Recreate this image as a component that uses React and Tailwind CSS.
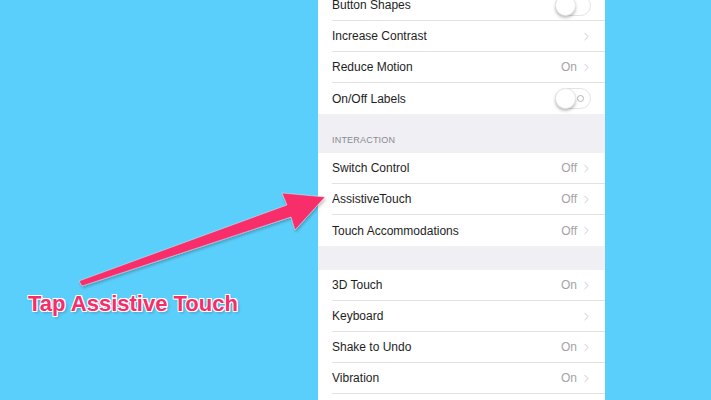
import { ChevronRight } from 'lucide-react'

const Toggle = ({ labels }) => (
  <div className="relative w-[36px] h-[21px] rounded-full border border-[#e3e3e6] bg-white">
    {labels && (
      <div className="absolute right-[6px] top-[6px] w-[7px] h-[7px] rounded-full border border-[#b4b4b8]" />
    )}
    <div className="absolute -left-px -top-px w-[21px] h-[21px] rounded-full bg-white shadow-[0_2px_3px_rgba(0,0,0,0.25)] border border-[#e6e6e8]" />
  </div>
)

const Row = ({ label, value, chevron, toggle, labels, last }) => (
  <div className="h-[31px] shrink-0 pl-[14px] bg-white">
    <div className={`h-full flex items-center pr-[14px] ${last ? '' : 'border-b border-[#e2e2e6]'}`}>
      <span className="flex-1 text-[12px] text-[#1e1e1e]">{label}</span>
      {value && <span className="text-[12px] text-[#a3a3a8] mr-[3px]">{value}</span>}
      {chevron && <ChevronRight size={13} strokeWidth={1.6} className="text-[#c4c4c9] -mr-[2px]" />}
      {toggle && <Toggle labels={labels} />}
    </div>
  </div>
)

export default function App() {
  return (
    <div
      className="relative w-[711px] h-[400px] overflow-hidden bg-[#5bcffb] flex"
      style={{ fontFamily: '"Liberation Sans", Arial, sans-serif' }}
    >
      <div className="w-[318px] shrink-0 flex flex-col justify-end pb-[80px] pl-[28px]">
        <span
          className="text-[22px] font-bold text-[#f72d6b]"
          style={{
            textShadow:
              '0 0 1px #fff, 1px 1px 0 #fff, -1px -1px 0 #fff, 1px -1px 0 #fff, -1px 1px 0 #fff, 2px 2px 3px rgba(0,0,0,0.25)',
          }}
        >
          Tap Assistive Touch
        </span>
      </div>

      <div className="w-[287px] shrink-0 bg-[#efeff4] flex flex-col -mt-[10px]">
        <Row label="Button Shapes" toggle />
        <Row label="Increase Contrast" chevron />
        <Row label="Reduce Motion" value="On" chevron />
        <Row label="On/Off Labels" toggle labels last />

        <div className="h-[39px] shrink-0 flex items-end pl-[14px] pb-[6px]">
          <span className="text-[9px] text-[#8a8a8f] tracking-[0.2px]">INTERACTION</span>
        </div>

        <Row label="Switch Control" value="Off" chevron />
        <Row label="AssistiveTouch" value="Off" chevron />
        <Row label="Touch Accommodations" value="Off" chevron last />

        <div className="h-[24px] shrink-0" />

        <Row label="3D Touch" value="On" chevron />
        <Row label="Keyboard" chevron />
        <Row label="Shake to Undo" value="On" chevron />
        <Row label="Vibration" value="On" chevron />
        <Row label="" />
      </div>

      <svg className="absolute inset-0 pointer-events-none" width="711" height="400">
        <defs>
          <filter id="sh" x="-10%" y="-10%" width="120%" height="130%">
            <feDropShadow dx="1" dy="2" stdDeviation="1.5" floodColor="#000" floodOpacity="0.25" />
          </filter>
        </defs>
        <polygon
          filter="url(#sh)"
          fill="#f72d6b"
          stroke="#fff"
          strokeOpacity="0.5"
          strokeWidth="0.8"
          points="79,281 287,205 282,193 325,197 295,230 291,217 82,286"
        />
      </svg>
    </div>
  )
}
